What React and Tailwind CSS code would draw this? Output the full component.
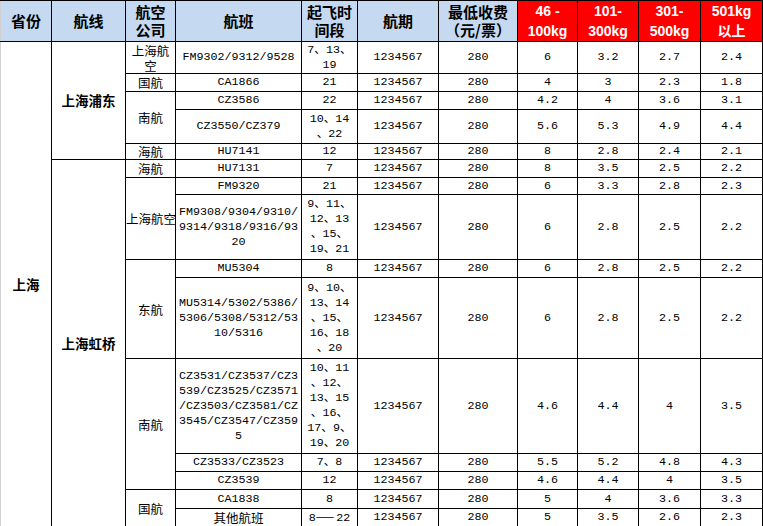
import React from "react";

const B = "border border-black p-0 text-center align-middle";
const M = `${B} font-['Liberation_Mono','Noto_Sans_CJK_SC',monospace] text-[11.7px] leading-[15px] whitespace-nowrap text-black`;
const C = `${B} font-['Noto_Sans_CJK_SC',sans-serif] text-[12.5px] leading-[15px] text-black`;
const H = `${B} bg-[#c5d9f1] font-['Noto_Sans_CJK_SC',sans-serif] font-bold text-[15px] leading-[18px] text-black`;
const R = `${B} bg-[#ff0000] font-['Liberation_Sans','Noto_Sans_CJK_SC',sans-serif] font-bold text-[14px] leading-[20px] text-white`;
const BOLD = `${B} font-['Noto_Sans_CJK_SC',sans-serif] font-bold text-[13.5px] text-black`;

function Vals({ v }) {
  return (
    <>
      <td className={M}>1234567</td>
      <td className={M}>280</td>
      {v.map((x, i) => (
        <td key={i} className={M}>
          {x}
        </td>
      ))}
    </>
  );
}

function L({ lines }) {
  return lines.map((l, i) => (
    <React.Fragment key={i}>
      {i > 0 && <br />}
      {l}
    </React.Fragment>
  ));
}

export default function App() {
  return (
    <div className="w-[763px] h-[526px] bg-white overflow-hidden">
      <table className="table-fixed border-collapse w-[763px]">
        <colgroup>
          <col className="w-[51px]" />
          <col className="w-[74px]" />
          <col className="w-[50px]" />
          <col className="w-[126px]" />
          <col className="w-[56px]" />
          <col className="w-[81px]" />
          <col className="w-[79px]" />
          <col className="w-[60px]" />
          <col className="w-[61px]" />
          <col className="w-[62px]" />
          <col className="w-[62px]" />
        </colgroup>
        <tbody>
          <tr className="h-[40px]">
            <td className={`${H} border-l-[#d0d0d0]`}>省份</td>
            <td className={H}>航线</td>
            <td className={H}>
              <L lines={["航空", "公司"]} />
            </td>
            <td className={H}>航班</td>
            <td className={H}>
              <L lines={["起飞时", "间段"]} />
            </td>
            <td className={H}>航期</td>
            <td className={H}>
              <L lines={["最低收费", "（元/票）"]} />
            </td>
            <td className={R}>
              <L lines={["46 -", "100kg"]} />
            </td>
            <td className={R}>
              <L lines={["101-", "300kg"]} />
            </td>
            <td className={R}>
              <L lines={["301-", "500kg"]} />
            </td>
            <td className={R}>
              <L lines={["501kg", "以上"]} />
            </td>
          </tr>

          {/* 上海浦东 */}
          <tr className="h-[32px]">
            <td rowSpan={15} className={`${BOLD} border-l-[#d0d0d0]`}>
              上海
            </td>
            <td rowSpan={5} className={BOLD}>
              上海浦东
            </td>
            <td className={C}>
              <L lines={["上海航", "空"]} />
            </td>
            <td className={M}>FM9302/9312/9528</td>
            <td className={M}>
              <L lines={["7、13、", "19"]} />
            </td>
            <Vals v={["6", "3.2", "2.7", "2.4"]} />
          </tr>
          <tr className="h-[18px]">
            <td className={C}>国航</td>
            <td className={M}>CA1866</td>
            <td className={M}>21</td>
            <Vals v={["4", "3", "2.3", "1.8"]} />
          </tr>
          <tr className="h-[18px]">
            <td rowSpan={2} className={C}>
              南航
            </td>
            <td className={M}>CZ3586</td>
            <td className={M}>22</td>
            <Vals v={["4.2", "4", "3.6", "3.1"]} />
          </tr>
          <tr className="h-[34px]">
            <td className={M}>CZ3550/CZ379</td>
            <td className={M}>
              <L lines={["10、14", "、22"]} />
            </td>
            <Vals v={["5.6", "5.3", "4.9", "4.4"]} />
          </tr>
          <tr className="h-[16px]">
            <td className={C}>海航</td>
            <td className={M}>HU7141</td>
            <td className={M}>12</td>
            <Vals v={["8", "2.8", "2.4", "2.1"]} />
          </tr>

          {/* 上海虹桥 */}
          <tr className="h-[18px]">
            <td rowSpan={10} className={BOLD}>
              上海虹桥
            </td>
            <td className={C}>海航</td>
            <td className={M}>HU7131</td>
            <td className={M}>7</td>
            <Vals v={["8", "3.5", "2.5", "2.2"]} />
          </tr>
          <tr className="h-[17px]">
            <td rowSpan={2} className={`${C} whitespace-nowrap`}>
              上海航空
            </td>
            <td className={M}>FM9320</td>
            <td className={M}>21</td>
            <Vals v={["6", "3.3", "2.8", "2.3"]} />
          </tr>
          <tr className="h-[65px]">
            <td className={M}>
              <L lines={["FM9308/9304/9310/", "9314/9318/9316/93", "20"]} />
            </td>
            <td className={M}>
              <L lines={["9、11、", "12、13", "、15、", "19、21"]} />
            </td>
            <Vals v={["6", "2.8", "2.5", "2.2"]} />
          </tr>
          <tr className="h-[18px]">
            <td rowSpan={2} className={C}>
              东航
            </td>
            <td className={M}>MU5304</td>
            <td className={M}>8</td>
            <Vals v={["6", "2.8", "2.5", "2.2"]} />
          </tr>
          <tr className="h-[81px]">
            <td className={M}>
              <L lines={["MU5314/5302/5386/", "5306/5308/5312/53", "10/5316"]} />
            </td>
            <td className={M}>
              <L lines={["9、10、", "13、14", "、15、", "16、18", "、20"]} />
            </td>
            <Vals v={["6", "2.8", "2.5", "2.2"]} />
          </tr>
          <tr className="h-[95px]">
            <td rowSpan={3} className={C}>
              南航
            </td>
            <td className={M}>
              <L
                lines={[
                  "CZ3531/CZ3537/CZ3",
                  "539/CZ3525/CZ3571",
                  "/CZ3503/CZ3581/CZ",
                  "3545/CZ3547/CZ359",
                  "5",
                ]}
              />
            </td>
            <td className={M}>
              <L lines={["10、11", "、12、", "13、15", "、16、", "17、9、", "19、20"]} />
            </td>
            <Vals v={["4.6", "4.4", "4", "3.5"]} />
          </tr>
          <tr className="h-[18px]">
            <td className={M}>CZ3533/CZ3523</td>
            <td className={M}>7、8</td>
            <Vals v={["5.5", "5.2", "4.8", "4.3"]} />
          </tr>
          <tr className="h-[18px]">
            <td className={M}>CZ3539</td>
            <td className={M}>12</td>
            <Vals v={["4.6", "4.4", "4", "3.5"]} />
          </tr>
          <tr className="h-[19px]">
            <td rowSpan={2} className={C}>
              国航
            </td>
            <td className={M}>CA1838</td>
            <td className={M}>8</td>
            <Vals v={["5", "4", "3.6", "3.3"]} />
          </tr>
          <tr className="h-[17px]">
            <td className={C}>其他航班</td>
            <td className={M}>
              8
              <span className="font-['Noto_Sans_CJK_SC',sans-serif] text-[11px] tracking-[2px]">
                ——
              </span>
              22
            </td>
            <Vals v={["5", "3.5", "2.6", "2.3"]} />
          </tr>
        </tbody>
      </table>
    </div>
  );
}
